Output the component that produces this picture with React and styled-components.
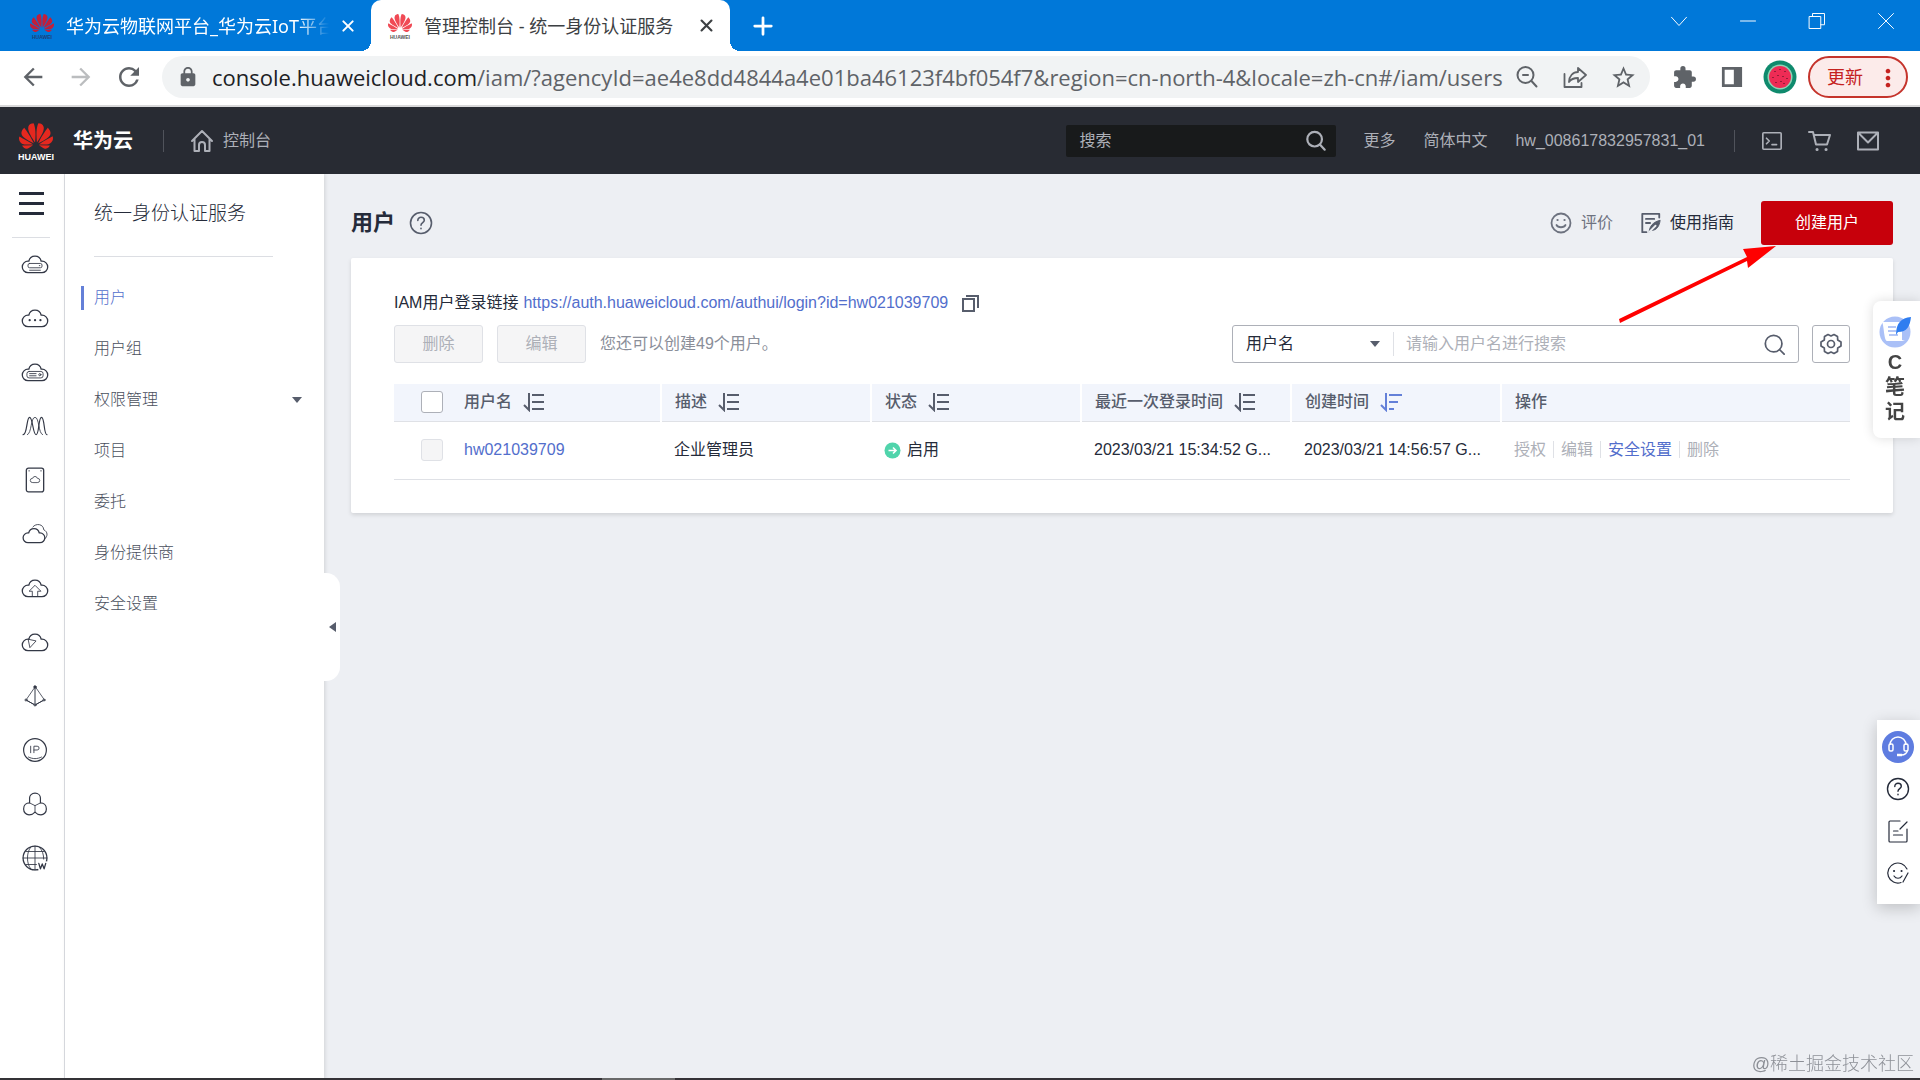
import React, { useState } from 'react'
import styled, { createGlobalStyle } from 'styled-components'
import { MdArrowBack, MdArrowForward, MdRefresh, MdLock, MdExtension, MdStarBorder, MdMoreVert } from 'react-icons/md'
import { SiHuawei } from 'react-icons/si'

const GlobalStyle = createGlobalStyle`
	* {
		box-sizing: border-box;
	}
	body {
		margin: 0;
		background: #edeff3;
		color: #252b3a;
		font-family: "Liberation Sans", "Noto Sans CJK SC", sans-serif;
		font-size: 16px;
		line-height: 24px;
	}
	a {
		color: inherit;
		text-decoration: none;
	}
	button, input, select {
		font: inherit;
		color: inherit;
	}
	button {
		padding: 0;
		border: 0;
		background: none;
	}
	svg {
		display: block;
		flex: none;
	}
`

const Page = styled.div`
	display: flex;
	flex-direction: column;
	min-height: 100vh;
`

/* browser window */

const TabStrip = styled.div`
	display: flex;
	height: 51px;
	background: #0078d9;
	color: #fff;
	font-family: "Noto Sans", "Noto Sans CJK SC", sans-serif;
	font-size: 18px;
`

const Tab = styled.div`
	position: relative;
	display: flex;
	align-items: center;
	gap: 12px;
	width: ${p => (p.$active ? 359 : 371)}px;
	padding: 0 16px 0 ${p => (p.$active ? 17 : 30)}px;
	border-radius: 10px 10px 0 0;
	background: ${p => (p.$active ? '#fff' : 'transparent')};
	color: ${p => (p.$active ? '#3c4043' : '#fff')};

	&::before, &::after {
		content: '';
		display: ${p => (p.$active ? 'block' : 'none')};
		position: absolute;
		bottom: 0;
		width: 10px;
		height: 10px;
	}
	&::before {
		left: -10px;
		background: radial-gradient(circle at 0 0, transparent 10px, #fff 10px);
	}
	&::after {
		right: -10px;
		background: radial-gradient(circle at 100% 0, transparent 10px, #fff 10px);
	}
`

const TabTitle = styled.span`
	flex: 1;
	min-width: 0;
	overflow: hidden;
	white-space: nowrap;
	mask-image: ${p => (p.$fade ? 'linear-gradient(to right, #000 88%, transparent)' : 'none')};
`

const IconButton = styled.button`
	display: flex;
	flex: none;
	align-items: center;
	justify-content: center;
	width: ${p => p.$size || 24}px;
	height: ${p => p.$size || 24}px;
`

const NewTab = styled(IconButton)`
	width: 66px;
	height: 51px;
`

const WindowButtons = styled.div`
	display: flex;
	margin-left: auto;

	button {
		width: 69px;
		height: 42px;
	}
`

const Toolbar = styled.div`
	display: flex;
	align-items: center;
	height: 56px;
	padding: 0 12px 2px 9px;
	border-bottom: 2px solid #d9d9da;
	background: #fff;
	color: #5f6368;
`

const Address = styled.div`
	display: flex;
	flex: 1;
	align-items: center;
	min-width: 0;
	height: 42px;
	margin: 0 10px 0 9px;
	padding: 0 3px 0 15px;
	border-radius: 21px;
	background: #f1f3f4;
`

const Url = styled.div`
	flex: 1;
	min-width: 0;
	margin-left: 13px;
	overflow: hidden;
	white-space: nowrap;
	font-family: "Open Sans", sans-serif;
	font-size: 22px;
	line-height: 32px;

	span {
		color: #202124;
	}
`

const UpdateButton = styled.button`
	display: flex;
	flex: none;
	align-items: center;
	justify-content: space-between;
	width: 100px;
	height: 42px;
	margin-left: 4px;
	padding: 2px 4px 0 17px;
	border: 2px solid #c5342c;
	border-radius: 21px;
	background: #fcebea;
	color: #c5221f;
	font-size: 18px;
`

/* console */

const ConsoleHeader = styled.header`
	display: flex;
	align-items: center;
	height: 67px;
	padding: 0 40px 0 18px;
	background: #282b33;
	color: #adb0b8;
`

const Brand = styled.a`
	display: flex;
	align-items: center;
	gap: 19px;
	color: #fff;
	font-size: 20px;
	font-weight: bold;
`

const Divider = styled.i`
	width: 1px;
	height: 22px;
	background: #50535b;
`

const HomeLink = styled.a`
	display: flex;
	align-items: center;
	gap: 9px;
	margin-left: 26px;
`

const SearchBox = styled.div`
	display: flex;
	align-items: center;
	width: 270px;
	height: 32px;
	margin-left: auto;
	padding: 0 9px 0 13px;
	border-radius: 2px;
	background: #181a1b;

	input {
		flex: 1;
		min-width: 0;
		padding: 0;
		border: 0;
		outline: 0;
		background: none;
	}
	input::placeholder {
		color: #adb0b8;
		opacity: 1;
	}
`

const HeaderLinks = styled.nav`
	display: flex;
	gap: 28px;
	margin: 0 29px 0 27px;
`

const HeaderIcons = styled.div`
	display: flex;
	gap: 24px;
	margin-left: 25px;
`

const Body = styled.div`
	position: relative;
	display: flex;
	flex: 1;
`

const Rail = styled.nav`
	width: 65px;
	border-right: 1px solid #dcdee3;
	background: #fff;
`

const RailToggle = styled.button`
	display: flex;
	align-items: center;
	width: 38px;
	height: 64px;
	margin: 0 0 -1px 12px;
	padding: 0 0 5px 7px;
	border-bottom: 1px solid #dcdee3;
`

const RailItem = styled.a`
	display: flex;
	align-items: center;
	justify-content: center;
	height: 54px;
	padding-left: 6px;
	color: #333846;
`

const Side = styled.aside`
	position: relative;
	width: 259px;
	background: #fff;
	box-shadow: 1px 0 4px rgba(0, 0, 0, 0.12);
`

const SideTitle = styled.h2`
	margin: 0 51px 15px 29px;
	padding: 26px 0 28px;
	border-bottom: 1px solid #dcdee3;
	font-size: 19px;
	font-weight: 300;
	line-height: 28px;
`

const SideItem = styled.a`
	display: flex;
	align-items: center;
	justify-content: space-between;
	height: 51px;
	padding: 0 22px 0 29px;
	color: ${p => (p.$active ? '#526ecc' : '#4a4f5d')};
	font-weight: 300;

	&::before {
		content: '';
		display: ${p => (p.$active ? 'block' : 'none')};
		width: 3px;
		height: 24px;
		margin: 0 10px 0 -13px;
		background: #6480d8;
	}
	span {
		flex: 1;
	}
`

const Collapse = styled.button`
	position: absolute;
	top: 399px;
	right: -16px;
	display: flex;
	align-items: center;
	justify-content: center;
	width: 16px;
	height: 108px;
	border-radius: 0 14px 14px 0;
	background: #fff;
`

const Caret = styled.i`
	border: 5px solid transparent;
	${p => (p.$left
		? 'border-right: 7px solid #575d6c; border-left: 0;'
		: 'border-top: 6px solid #575d6c; border-bottom: 0;')}
`

const Main = styled.main`
	flex: 1;
	min-width: 0;
	padding: 27px;
`

const TitleRow = styled.div`
	display: flex;
	align-items: center;
	height: 44px;

	h1 {
		margin: 0 14px 0 0;
		font-size: 22px;
	}
`

const Action = styled.a`
	display: flex;
	align-items: center;
	gap: 8px;
	margin-right: 27px;
	color: ${p => (p.$muted ? '#6d727f' : '#252b3a')};
`

const Spacer = styled.div`
	flex: 1;
`

const PrimaryButton = styled.button`
	width: 132px;
	height: 44px;
	border-radius: 3px;
	background: #c7000b;
	color: #fff;
`

const Card = styled.section`
	margin-top: 13px;
	padding: 33px 43px;
	border-radius: 2px;
	background: #fff;
	box-shadow: 0 2px 4px rgba(0, 0, 0, 0.12);
`

const LoginLink = styled.div`
	display: flex;
	align-items: center;
	height: 24px;

	a {
		margin: 0 14px 0 5px;
		color: #526ecc;
	}
`

const Tools = styled.div`
	display: flex;
	align-items: center;
	margin: 10px 0 21px;
	color: #8a8e99;
`

const GhostButton = styled.button`
	width: 89px;
	height: 38px;
	margin-right: 14px;
	border: 1px solid #dfe1e6;
	border-radius: 3px;
	background: #f5f5f6;

	&:disabled {
		color: #adb0b8;
	}
`

const Filter = styled.div`
	display: flex;
	align-items: center;
	width: 567px;
	height: 38px;
	padding: 0 13px;
	border: 1px solid #adb0b8;
	border-radius: 3px;
	color: #252b3a;

	select {
		width: 124px;
		padding: 0;
		border: 0;
		outline: 0;
		appearance: none;
		background: none;
	}
	i + i {
		width: 1px;
		height: 24px;
		margin: 0 12px 0 13px;
		background: #dfe1e6;
	}
	input {
		flex: 1;
		min-width: 0;
		padding: 0;
		border: 0;
		outline: 0;
	}
	input::placeholder {
		color: #adb0b8;
		opacity: 1;
	}
`

const Settings = styled.button`
	display: flex;
	align-items: center;
	justify-content: center;
	width: 38px;
	height: 38px;
	margin-left: 13px;
	border: 1px solid #adb0b8;
	border-radius: 3px;
`

const Table = styled.table`
	width: 100%;
	border-collapse: collapse;
	table-layout: fixed;
	text-align: left;

	th, td {
		padding: 0 13px;
		border-bottom: 1px solid #dfe1e6;
		white-space: nowrap;
	}
	th {
		height: 37px;
		background: #f2f5fc;
		color: #575d6c;
		font-weight: 500;
	}
	th + th {
		border-left: 2px solid #fff;
	}
	td {
		height: 58px;
	}
	th:first-child, td:first-child {
		padding: 0 0 0 27px;
	}
	th:nth-child(2) {
		border-left: 0;
	}
`

const Cell = styled.div`
	display: flex;
	align-items: center;
	gap: ${p => p.$gap}px;
`

const Check = styled.input`
	display: block;
	appearance: none;
	width: 22px;
	height: 22px;
	margin: 0;
	border: 1px solid #adb0b8;
	border-radius: 3px;
	background: #fff;

	&:disabled {
		border-color: #dfe1e6;
		background: #f5f5f6;
	}
`

const RowLink = styled.a`
	color: ${p => (p.$off ? '#adb0b8' : '#526ecc')};

	& + & {
		margin-left: 7px;
		padding-left: 7px;
		border-left: 1px solid #dfe1e6;
	}
`

const Notes = styled.aside`
	position: fixed;
	top: 301px;
	right: 0;
	display: flex;
	flex-direction: column;
	align-items: center;
	width: 47px;
	height: 137px;
	padding: 13px 3px 0 0;
	border-radius: 8px 0 0 8px;
	background: #fff;
	box-shadow: 0 0 12px rgba(0, 0, 0, 0.14);
	color: #444;
	font-size: 20px;
	font-weight: bold;
	line-height: 25px;

	svg {
		margin-bottom: 2px;
	}
`

const Helper = styled.aside`
	position: fixed;
	top: 720px;
	right: 0;
	display: flex;
	flex-direction: column;
	align-items: center;
	gap: 10px;
	width: 43px;
	height: 184px;
	padding: 11px 1px 0 0;
	background: #fff;
	box-shadow: 0 4px 16px rgba(0, 0, 0, 0.2);
`

const Pointer = styled.svg`
	position: absolute;
	top: 72px;
	right: 144px;
`

const Watermark = styled.div`
	position: fixed;
	right: 6px;
	bottom: 4px;
	color: #8d9097;
	font-size: 18px;
	font-weight: 300;
`

const Taskbar = styled.div`
	position: fixed;
	right: 0;
	bottom: 0;
	left: 0;
	height: 2px;
	background: linear-gradient(#696969, #696969) 602px 0 / 73px 2px no-repeat #343236;
`

const LogoBox = styled.span`
	display: flex;
	flex-direction: column;
	align-items: center;
	color: ${p => p.$color};
	font-family: "Liberation Sans", sans-serif;
	font-weight: bold;
	font-size: ${p => p.$font}px;
	line-height: ${p => p.$font}px;
`

/* icons */

const Logo = ({ size, font, color, word }) => (
	<LogoBox $font={font} $color={word}>
		<SiHuawei size={size} color={color} />
		HUAWEI
	</LogoBox>
)

const Svg = ({ size = 24, w = 1.5, children, ...rest }) => (
	<svg width={size} height={size} viewBox="0 0 24 24" fill="none" stroke="currentColor" strokeWidth={w} strokeLinecap="round" strokeLinejoin="round" {...rest}>
		{children}
	</svg>
)

const Close = ({ size, w }) => <Svg size={size} w={w}><path d="M5 5l14 14M19 5L5 19" /></Svg>

const Magnifier = ({ size, w = 2.4, children }) => (
	<Svg size={size} w={w}><circle cx="10.500" cy="10" r="8" /><path d="M16.500 16l5 5.500" />{children}</Svg>
)

const Sort = ({ active }) => (
	<svg width="22" height="20" viewBox="0 0 22 20" fill="none" stroke={active ? '#6480d8' : '#575d6c'} strokeWidth="2">
		<path d="M6 1v17L1 13" />
		<path d={active ? 'M9 3h13M9 10h9M9 17h5' : 'M9 3h12M9 10h12M9 17h12'} />
	</svg>
)

const CLOUD = 'M6.500 20a5.300 5.300 0 0 1 0-10.600h.8a5.800 5.800 0 0 1 11.400 0h.8a5.300 5.300 0 0 1 0 10.600z'

const Cloud = ({ children }) => (
	<svg width="28" height="26" viewBox="0 0 26 24" fill="none" stroke="currentColor" strokeWidth="1.2" strokeLinecap="round">
		<path d={CLOUD} />
		{children}
	</svg>
)

const thin = { strokeWidth: 0.8, fill: 'none' }

const RAIL = [
	['弹性云服务器', <Cloud><rect x="6.500" y="11.500" width="13" height="4" rx="1.500" {...thin} /><path d="M17 13.500h.5M8 17.800h10" {...thin} /></Cloud>],
	['云耀服务器', <Cloud><path d="M8 14h.1M13 14h.1M18 14h.1" strokeWidth="2" /></Cloud>],
	['裸金属服务器', <Cloud><rect x="5.500" y="11.500" width="15" height="6" rx="2" {...thin} /><path d="M8 13.500h6M8 15.500h6" {...thin} /><circle cx="17.500" cy="14.500" r="1" {...thin} /></Cloud>],
	['弹性伸缩', <Svg size={26} w="1.1"><path d="M1 20c4 0 3-16 6-16s3 16 6 16 2-16 5-16 2 16 5 16" /><path d="M5 20c4-1 3-16 7-16s3 15 7 16" {...thin} /></Svg>],
	['云硬盘', <Svg size={26} w="1.2"><rect x="4" y="1" width="16" height="22" rx="2" /><path d="M6.500 3.500h.1M17.500 3.500h.1" /><path transform="translate(7.200 7) scale(.37)" d={CLOUD} strokeWidth="2" /></Svg>],
	['云备份', <Svg size={26} w="1.2"><path transform="translate(0 3) scale(.85)" d={CLOUD} strokeWidth="1.400" /><path d="M10 5.500c3-4 10-2.500 10 2.500 4 2 4 6 1 8.500" {...thin} /></Svg>],
	['对象存储', <Cloud><path d="M10.500 20v-5H7.500l5.500-5.500 5.500 5.500h-3v5" {...thin} /></Cloud>],
	['弹性文件', <Cloud><path d="M7 9.500l7 1.500-5.500 6z" {...thin} /></Cloud>],
	['虚拟私有云', <Svg size={24} w="1"><path d="M12 3L3 16l9 5 9-5z" strokeWidth=".8" /><path d="M3 16l9 5 9-5M12 3v17" /><circle cx="12" cy="3" r="1.200" fill="currentColor" /><g fill="#fff"><circle cx="3" cy="16" r="1" /><circle cx="21" cy="16" r="1" /><circle cx="12" cy="21" r="1" /></g></Svg>],
	['弹性公网IP', <Svg size={26} w="1.1"><circle cx="12" cy="12" r="10.500" /><path d="M8 8.500v6M11 14.500v-6h3a1.700 1.700 0 0 1 0 3.500h-3M6 18.500c4 2 8 2 12 0" {...thin} /></Svg>],
	['弹性负载均衡', <Svg size={26} w="1.1"><path d="M7 11V6.500C7 4 9 2 12 2s5 2 5 4.500V11c3 0 5.500 2 5.500 5.500S20 22 17.500 22c-2 0-4-.8-5.500-2.500C10.500 21.200 8.500 22 6.500 22 4 22 1.500 20 1.500 16.500S4 11 7 11z" /><path d="M7 11l5 2.500 5-2.500M12 13.500v6" {...thin} /></Svg>],
	['域名', <Svg size={26} w="1.200"><circle cx="12" cy="12" r="11" /><path d="M12 1v22M1 12h22M3.500 6h17M3.500 18h11" {...thin} /><path d="M8 2C4 7 4 17 8 22M16 2c3 3 4 7 4 11" {...thin} /><path d="M15.500 17l1.500 5 1.700-4.500 1.700 4.500 1.500-5" stroke="#fff" strokeWidth="4" /><path d="M15.500 17l1.500 5 1.700-4.500 1.700 4.500 1.500-5" /></Svg>],
]

const MENU = ['用户', '用户组', '权限管理', '项目', '委托', '身份提供商', '安全设置']

const COLUMNS = [
	{ title: '用户名' },
	{ title: '描述' },
	{ title: '状态' },
	{ title: '最近一次登录时间' },
	{ title: '创建时间', active: true },
]

const Browser = () => (
	<>
		<TabStrip>
			<Tab>
				<Logo size={24} font={5} color="#c21f3a" word="#1d3f78" />
				<TabTitle $fade>华为云物联网平台_华为云IoT平台</TabTitle>
				<IconButton type="button" aria-label="关闭" $size={14}><Close size={16} w="3" /></IconButton>
			</Tab>
			<Tab $active>
				<Logo size={24} font={5} color="#f04a55" word="#555" />
				<TabTitle>管理控制台 - 统一身份认证服务</TabTitle>
				<IconButton type="button" aria-label="关闭" $size={16}><Close size={17} w="3" /></IconButton>
			</Tab>
			<NewTab type="button" aria-label="新标签页"><Svg size={22} w="3"><path d="M12 3v18M3 12h18" /></Svg></NewTab>
			<WindowButtons>
				<IconButton type="button" aria-label="搜索标签页"><Svg size={18} w="1.300"><path d="M2 7l10 11L22 7" /></Svg></IconButton>
				<IconButton type="button" aria-label="最小化"><Svg size={18} w="1.300"><path d="M2 12h20" /></Svg></IconButton>
				<IconButton type="button" aria-label="还原"><Svg size={18} w="1.300"><path d="M2 6h15v16H2zM6 6V2h16v15h-5" /></Svg></IconButton>
				<IconButton type="button" aria-label="关闭窗口"><Svg size={18} w="1.300"><path d="M2 2l20 20M22 2L2 22" /></Svg></IconButton>
			</WindowButtons>
		</TabStrip>
		<Toolbar>
			<IconButton type="button" aria-label="后退" $size={48}><MdArrowBack size={28} /></IconButton>
			<IconButton type="button" aria-label="前进" $size={48}><MdArrowForward size={28} color="#bbbdbf" /></IconButton>
			<IconButton type="button" aria-label="刷新" $size={48}><MdRefresh size={30} /></IconButton>
			<Address>
				<MdLock size={22} />
				<Url><span>console.huaweicloud.com</span>/iam/?agencyId=ae4e8dd4844a4e01ba46123f4bf054f7&amp;region=cn-north-4&amp;locale=zh-cn#/iam/users</Url>
				<IconButton type="button" aria-label="缩放" $size={48}><Magnifier size={24} w="2"><path d="M8 10h5" /></Magnifier></IconButton>
				<IconButton type="button" aria-label="分享" $size={48}><Svg size={24} w="1.800"><path d="M1.500 9v13h17v-4" /><path d="M15 3l8 7-8 7v-4c-4 0-7 1-9 4 0-6 4-10 9-10z" /></Svg></IconButton>
				<IconButton type="button" aria-label="收藏" $size={48}><MdStarBorder size={27} /></IconButton>
			</Address>
			<IconButton type="button" aria-label="扩展程序" $size={48}><MdExtension size={25} /></IconButton>
			<IconButton type="button" aria-label="侧边栏" $size={48}><Svg size={22}><path fill="currentColor" stroke="none" d="M1 1h22v22H1zM4 4v16h10V4z" fillRule="evenodd" /></Svg></IconButton>
			<IconButton type="button" aria-label="个人资料" $size={48}>
				<svg width="34" height="34" viewBox="0 0 34 34">
					<circle cx="17" cy="17" r="16.500" fill="#0f8a6d" />
					<circle cx="17" cy="17" r="12.500" fill="#8fd3b5" />
					<circle cx="17" cy="17" r="11" fill="#ee2b55" />
					<path d="M12 11v1M17 9v1M22 11v1M10 17v1M15 15v1M20 16v1M24 18v1M13 22v1M18 21v1M21 23v1" stroke="#5c1426" strokeWidth="1.200" />
				</svg>
			</IconButton>
			<UpdateButton type="button">更新<MdMoreVert size={28} /></UpdateButton>
		</Toolbar>
	</>
)

const Header = () => (
	<ConsoleHeader>
		<Brand href="#home"><Logo size={34} font={9} color="#e5281f" word="#fff" />华为云</Brand>
		<Divider style={{ marginLeft: 30 }} />
		<HomeLink href="#console">
			<Svg size={24} w="2"><path d="M2 12L12 2l10 10M4.500 10v12H9v-6a3 3 0 0 1 6 0v6h4.500V10" /></Svg>
			控制台
		</HomeLink>
		<SearchBox>
			<input aria-label="搜索" placeholder="搜索" />
			<Magnifier size={22} />
		</SearchBox>
		<HeaderLinks>
			<a href="#more">更多</a>
			<a href="#lang">简体中文</a>
			<a href="#account">hw_008617832957831_01</a>
		</HeaderLinks>
		<Divider />
		<HeaderIcons>
			<IconButton type="button" aria-label="CloudShell"><Svg size={22} w="1.800"><rect x="2" y="3" width="20" height="18" rx="1" /><path d="M6 9l3 3-3 3M12 16h5" /></Svg></IconButton>
			<IconButton type="button" aria-label="购物车"><Svg size={24} w="2"><path d="M1 3h4l3 12.500h11L22 6H6" /><path d="M9 20.500h.1M18 20.500h.1" strokeWidth="3" /></Svg></IconButton>
			<IconButton type="button" aria-label="消息"><Svg size={24} w="2"><path d="M2 3.500h20v17H2zM2 3.500l10 10 10-10" /></Svg></IconButton>
		</HeaderIcons>
	</ConsoleHeader>
)

const UserTable = () => {
	const [all, setAll] = useState(false)

	return (
		<Table>
			<colgroup>
				<col width="57" />
				{COLUMNS.map(c => <col key={c.title} width="210" />)}
				<col />
			</colgroup>
			<thead>
				<tr>
					<th><Check type="checkbox" aria-label="全选" checked={all} onChange={e => setAll(e.target.checked)} /></th>
					{COLUMNS.map(c => (
						<th key={c.title}><Cell $gap={11}>{c.title}<Sort active={c.active} /></Cell></th>
					))}
					<th>操作</th>
				</tr>
			</thead>
			<tbody>
				<tr>
					<td><Check type="checkbox" aria-label="hw021039709" disabled /></td>
					<td><RowLink href="#user">hw021039709</RowLink></td>
					<td>企业管理员</td>
					<td>
						<Cell $gap={6}>
							<svg width="17" height="17" viewBox="0 0 17 17"><circle cx="8.500" cy="8.500" r="8" fill="#50d4ab" /><path d="M4.500 8.500h7M9 5.500l3 3-3 3" fill="none" stroke="#fff" strokeWidth="1.600" /></svg>
							启用
						</Cell>
					</td>
					<td>2023/03/21 15:34:52 G...</td>
					<td>2023/03/21 14:56:57 G...</td>
					<td>
						<RowLink $off href="#grant">授权</RowLink>
						<RowLink $off href="#edit">编辑</RowLink>
						<RowLink href="#security">安全设置</RowLink>
						<RowLink $off href="#delete">删除</RowLink>
					</td>
				</tr>
			</tbody>
		</Table>
	)
}

const Question = ({ w, color }) => (
	<Svg w={w} color={color}><circle cx="12" cy="12" r="10.500" /><path d="M8.800 9.500c0-4.500 6.500-4 6.500-.3 0 2.300-3.300 2.500-3.300 5M12 17.300v.4" /></Svg>
)

const App = () => (
	<Page>
		<GlobalStyle />
		<Browser />
		<Header />
		<Body>
			<Rail>
				<RailToggle type="button" aria-label="服务列表">
					<svg width="25" height="23" viewBox="0 0 25 23" stroke="#252b3a" strokeWidth="3"><path d="M0 1.500h25M0 11.500h25M0 21.500h25" /></svg>
				</RailToggle>
				{RAIL.map(([name, icon]) => <RailItem key={name} href="#service" aria-label={name}>{icon}</RailItem>)}
			</Rail>
			<Side>
				<SideTitle>统一身份认证服务</SideTitle>
				{MENU.map((name, i) => (
					<SideItem key={name} href="#menu" $active={i === 0}>
						<span>{name}</span>
						{name === '权限管理' && <Caret />}
					</SideItem>
				))}
				<Collapse type="button" aria-label="收起"><Caret $left /></Collapse>
			</Side>
			<Main>
				<TitleRow>
					<h1>用户</h1>
					<Question w="1.600" color="#575d6c" />
					<Spacer />
					<Action $muted href="#rate">
						<Svg size={24} w="1.800"><circle cx="12" cy="12" r="9.500" /><path d="M7.500 14c1.500 3 7.500 3 9 0" /><path d="M8.500 9h.1M15.500 9h.1" strokeWidth="2.200" /></Svg>
						评价
					</Action>
					<Action href="#guide">
						<Svg size={22} w="2" stroke="#575d6c"><path d="M7 22H2.500V2H21v4M6.500 7.500h9M6.500 12H11" /><path d="M10 22c0-6 4-11 12-13-1 7-4 11-9 11z" fill="#575d6c" strokeWidth="1" /><path d="M10 22l7-7" stroke="#edeff3" /></Svg>
						使用指南
					</Action>
					<PrimaryButton type="button">创建用户</PrimaryButton>
				</TitleRow>
				<Card>
					<LoginLink>
						IAM用户登录链接
						<a href="#login">https://auth.huaweicloud.com/authui/login?id=hw021039709</a>
						<svg width="17" height="17" viewBox="0 0 17 17" fill="none" stroke="#575d6c" strokeWidth="2"><path d="M1 4h11v12H1zM4 1h12v12" /></svg>
					</LoginLink>
					<Tools>
						<GhostButton type="button" disabled>删除</GhostButton>
						<GhostButton type="button" disabled>编辑</GhostButton>
						您还可以创建49个用户。
						<Spacer />
						<Filter>
							<select aria-label="筛选条件"><option>用户名</option></select>
							<Caret />
							<i />
							<input aria-label="搜索用户" placeholder="请输入用户名进行搜索" />
							<Svg size={21} w="2" stroke="#575d6c"><circle cx="11" cy="11" r="9.500" /><path d="M18 18l5 5" /></Svg>
						</Filter>
						<Settings type="button" aria-label="设置">
							<Svg size={24} w="1.700" stroke="#575d6c"><path d="M9 2.500l3 1.500 3-1.500 3.500 2 .2 3.400 3.300 2v4.200l-3.300 2-.2 3.400-3.500 2-3-1.500-3 1.500-3.500-2-.2-3.400L2 14.100V9.900l3.300-2 .2-3.400z" /><circle cx="12" cy="12" r="3.500" /></Svg>
						</Settings>
					</Tools>
					<UserTable />
				</Card>
			</Main>
			<Pointer width="158" height="78" viewBox="0 0 158 78" fill="#f00">
				<path d="M1 73L129 11l-4-8L158 0l-28 22-1-7L2 77z" />
			</Pointer>
		</Body>
		<Notes>
			<svg width="34" height="34" viewBox="0 0 34 34">
				<circle cx="17" cy="18" r="15.500" fill="#aac0f7" />
				<path d="M4 8h20v18l3 1H9c-3 0-3-16-5-19z" fill="#fff" />
				<path d="M10 13h8M10 17h8M11 21h9" stroke="#9db5f3" strokeWidth="1.500" />
				<path d="M18 21C18 9 23 4 33 3c-1 9-4 15-13 15z" fill="#2f7df0" />
			</svg>
			<span>C</span>
			<span>笔</span>
			<span>记</span>
		</Notes>
		<Helper>
			<IconButton type="button" aria-label="客服" $size={32}>
				<svg width="32" height="32" viewBox="0 0 32 32" fill="none" stroke="#fff" strokeWidth="1.500">
					<circle cx="16" cy="16" r="16" fill="#5e7ce0" stroke="none" />
					<path d="M8 14a8 8 0 0 1 16 0M25.500 19c0 3-3 5-6 5" />
					<rect x="7" y="13" width="4" height="7" rx="1.500" /><rect x="22" y="13" width="4" height="7" rx="1.500" /><path d="M15 24h5" strokeWidth="2.500" />
				</svg>
			</IconButton>
			<IconButton type="button" aria-label="帮助" $size={32}><Question w="1.400" /></IconButton>
			<IconButton type="button" aria-label="反馈" $size={32}><Svg size={24} w="1.200"><path d="M14 2H4a1 1 0 0 0-1 1v19a1 1 0 0 0 1 1h16a1 1 0 0 0 1-1V10M21 3l-7 7M7.500 12H12M7.500 16h9" /></Svg></IconButton>
			<IconButton type="button" aria-label="评价" $size={32}><Svg size={24} w="1.200"><path d="M21 8A10 10 0 1 0 15 21.500M17 21l5-9M8 15c2 3 6 3 8 0" /><path d="M8 10h.1M15.500 10h.1" strokeWidth="2" /></Svg></IconButton>
		</Helper>
		<Watermark>@稀土掘金技术社区</Watermark>
		<Taskbar />
	</Page>
)

export default App
